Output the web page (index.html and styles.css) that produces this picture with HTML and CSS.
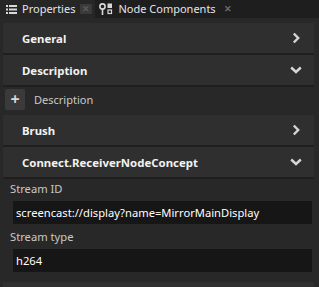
FILE: index.html
```html
<!DOCTYPE html>
<html lang="en">
<head>
    <meta charset="UTF-8">
    <title>Properties</title>
    <link rel="stylesheet" href="styles.css">
</head>
<body>
    <div class="tabs">
        <div class="tab active">
            <svg class="tab-icon" width="11" height="9" viewBox="0 0 11 9">
                <rect x="0" y="0" width="2" height="2" fill="#d8d8d8"/>
                <rect x="3" y="0" width="8" height="2" fill="#d8d8d8"/>
                <rect x="0" y="3.5" width="2" height="2" fill="#d8d8d8"/>
                <rect x="3" y="3.5" width="8" height="2" fill="#d8d8d8"/>
                <rect x="0" y="7" width="2" height="2" fill="#d8d8d8"/>
                <rect x="3" y="7" width="8" height="2" fill="#d8d8d8"/>
            </svg>
            <span>Properties</span>
            <span class="close boxed">&#10005;</span>
        </div>
        <div class="tab">
            <svg class="tab-icon" width="14" height="12" viewBox="0 0 14 12">
                <circle cx="3.5" cy="3.5" r="2.6" fill="none" stroke="#d8d8d8" stroke-width="1.6"/>
                <rect x="2.7" y="6" width="1.6" height="6" fill="#d8d8d8"/>
                <rect x="8.5" y="0.5" width="4.5" height="4.5" fill="#d8d8d8"/>
                <rect x="9" y="7" width="3.5" height="3.5" fill="none" stroke="#d8d8d8" stroke-width="1.2"/>
            </svg>
            <span>Node Components</span>
            <span class="close">&#10005;</span>
        </div>
    </div>

    <div class="panel">
        <div class="section">
            <span>General</span>
            <svg class="chev" width="12" height="12" viewBox="0 0 12 12"><path d="M3.8 1.5 L8.2 6 L3.8 10.5" fill="none" stroke="#d6d6d6" stroke-width="2.4"/></svg>
        </div>
        <div class="section">
            <span>Description</span>
            <svg class="chev" width="12" height="12" viewBox="0 0 12 12"><path d="M1.2 3.5 L6 8 L10.8 3.5" fill="none" stroke="#d6d6d6" stroke-width="2.4"/></svg>
        </div>
        <div class="add-row">
            <span class="add-btn">+</span>
            <span>Description</span>
        </div>
        <div class="section">
            <span>Brush</span>
            <svg class="chev" width="12" height="12" viewBox="0 0 12 12"><path d="M3.8 1.5 L8.2 6 L3.8 10.5" fill="none" stroke="#d6d6d6" stroke-width="2.4"/></svg>
        </div>
        <div class="section">
            <span>Connect.ReceiverNodeConcept</span>
            <svg class="chev" width="12" height="12" viewBox="0 0 12 12"><path d="M1.2 3.5 L6 8 L10.8 3.5" fill="none" stroke="#d6d6d6" stroke-width="2.4"/></svg>
        </div>
        <div class="field">
            <label>Stream ID</label>
            <div class="input">screencast://display?name=MirrorMainDisplay</div>
        </div>
        <div class="field">
            <label>Stream type</label>
            <div class="input">h264</div>
        </div>
        <div class="section next"></div>
    </div>
</body>
</html>
```

FILE: styles.css
```css
body { margin: 0; background: #1e1e1e; font-family: "Noto Sans", "Open Sans", sans-serif; font-size: 11px; color: #e4e4e4; width: 319px; height: 287px; overflow: hidden; }
.tabs { display: flex; height: 18px; background: #1e1e1e; }
.tab { display: flex; align-items: center; padding: 0 5px 0 4px; height: 18px; }
.tab.active { background: #262626; padding: 0 3px 0 6px; }
.tab span { line-height: 18px; }
.tab-icon { flex: none; margin-right: 5px; }
.close { color: #6a6a6a; font-size: 9px; font-weight: bold; margin-left: 8px; }
.close.boxed { background: #3a3a3a; width: 12px; height: 10px; line-height: 10px !important; text-align: center; color: #5a5a5a; margin-left: 5px; }
.panel { background: #282828; height: 264px; padding: 5px 5px 0 3px; overflow: hidden; }
.section { display: flex; justify-content: space-between; align-items: center; height: 30px; background: #2f2f2f; border-bottom: 2px solid #1f1f1f; padding: 0 12px 0 19px; font-weight: bold; font-size: 11.4px; color: #f2f2f2; }
.section.next { margin-top: 7px; border-bottom: none; }
.chev { flex: none; }
.add-row { display: flex; align-items: center; gap: 9px; height: 25px; padding: 0 0 3px 2px; color: #c8c8c8; }
.add-btn { width: 20px; height: 21px; background: #3a3a3a; border-radius: 2px; text-align: center; line-height: 20px; font-size: 16px; font-weight: bold; color: #d8d8d8; }
.field { display: flex; flex-direction: column; padding: 0 2px 0 7px; }
.field label { color: #c8c8c8; height: 22px; line-height: 20px; font-size: 11.2px; }
.input { background: #161616; height: 23px; line-height: 23px; padding-left: 3px; margin: 0 0 3px 3px; color: #ffffff; font-size: 11.2px; }
```
